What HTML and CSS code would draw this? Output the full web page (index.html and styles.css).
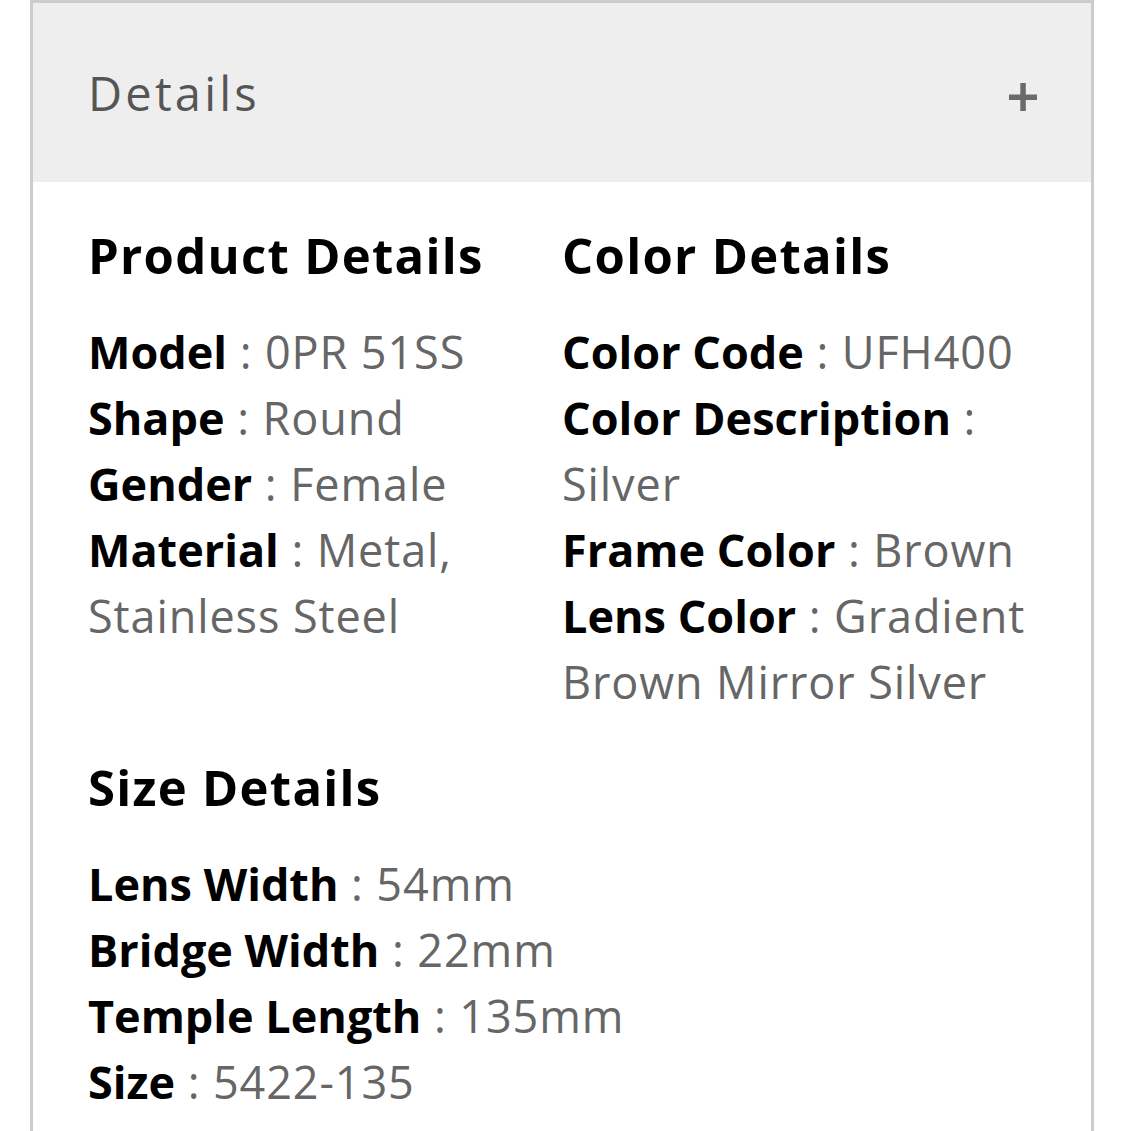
FILE: index.html
```html
<!DOCTYPE html>
<html lang="en">
<head>
<meta charset="utf-8">
<title>Details</title>
<link rel="stylesheet" href="styles.css">
</head>
<body>
<div class="panel">
  <div class="panel-head">
    <span class="panel-title">Details</span>
    <svg class="plus" width="30" height="30" viewBox="0 0 30 30" aria-hidden="true">
      <rect x="1" y="12.5" width="28" height="5.5" fill="#6a6a6a"/>
      <rect x="12.3" y="1" width="5.5" height="28" fill="#6a6a6a"/>
    </svg>
  </div>
  <div class="panel-body">
    <div class="grid">
      <section class="group">
        <h2 class="group-title">Product Details</h2>
        <p class="row"><span class="k">Model</span> : 0PR 51SS</p>
        <p class="row"><span class="k">Shape</span> : Round</p>
        <p class="row"><span class="k">Gender</span> : Female</p>
        <p class="row"><span class="k">Material</span> : Metal, Stainless Steel</p>
      </section>
      <section class="group">
        <h2 class="group-title">Color Details</h2>
        <p class="row"><span class="k">Color Code</span> : UFH400</p>
        <p class="row"><span class="k">Color Description</span> : Silver</p>
        <p class="row"><span class="k">Frame Color</span> : Brown</p>
        <p class="row"><span class="k">Lens Color</span> : Gradient Brown Mirror Silver</p>
      </section>
      <section class="group group-wide">
        <h2 class="group-title">Size Details</h2>
        <p class="row"><span class="k">Lens Width</span> : 54mm</p>
        <p class="row"><span class="k">Bridge Width</span> : 22mm</p>
        <p class="row"><span class="k">Temple Length</span> : 135mm</p>
        <p class="row"><span class="k">Size</span> : 5422-135</p>
      </section>
    </div>
  </div>
</div>
</body>
</html>
```
FILE: styles.css
```css
html, body {
  margin: 0;
  padding: 0;
  background: #ffffff;
}
body {
  font-family: "Open Sans", "Liberation Sans", sans-serif;
  overflow: hidden;
}
.panel {
  margin-left: 30px;
  width: 1064px;
  box-sizing: border-box;
  border: 3px solid #cccccc;
  border-bottom: none;
  min-height: 1131px;
}
.panel-head {
  height: 179px;
  background: #eeeeee;
  display: flex;
  align-items: center;
  justify-content: space-between;
  padding: 0 53px 0 55px;
}
.panel-title {
  font-size: 47px;
  font-weight: 400;
  color: #555555;
  letter-spacing: 3.2px;
  margin-top: 0;
}
.plus {
  display: block;
  margin-top: 8px;
}
.panel-body {
  padding: 43px 50px 0 55px;
}
.grid {
  display: grid;
  grid-template-columns: 450px 1fr;
  column-gap: 24px;
  row-gap: 42px;
}
.group-wide {
  grid-column: 1 / -1;
}
.group-title {
  margin: 0 0 34px 0;
  font-size: 49px;
  line-height: 60px;
  font-weight: 700;
  color: #000000;
  letter-spacing: 1.3px;
}
.row {
  margin: 0;
  font-size: 45px;
  line-height: 66px;
  color: #666666;
  letter-spacing: 0.9px;
}
.k {
  font-weight: 700;
  color: #000000;
  letter-spacing: 0;
}
```
